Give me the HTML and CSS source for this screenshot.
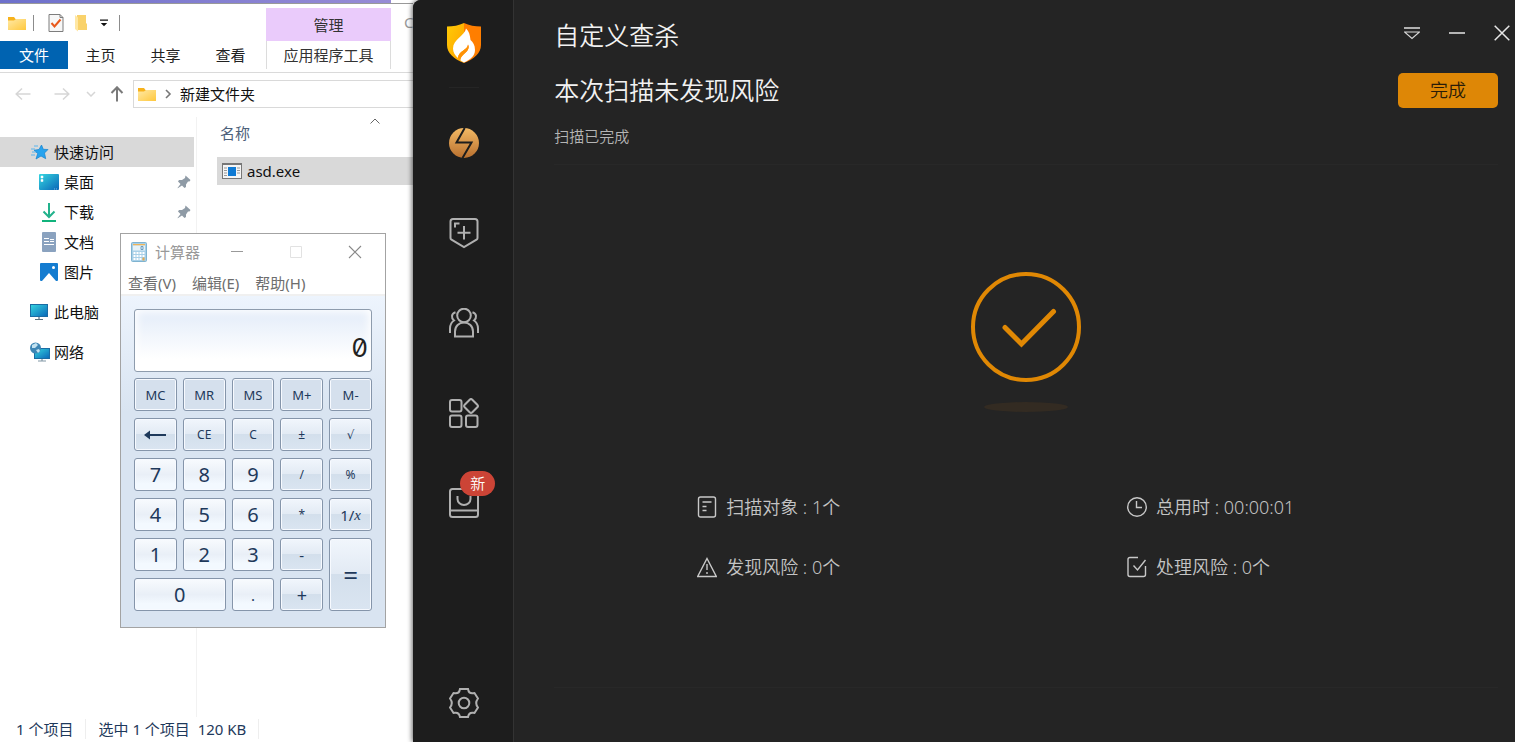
FILE: index.html
```html
<!DOCTYPE html>
<html lang="zh-CN">
<head>
    <meta charset="UTF-8">
    <meta name="viewport" content="width=device-width, initial-scale=1.0">
    <title>自定义查杀</title>
    <link rel="stylesheet" href="styles.css">
</head>
<body>
    <svg width="0" height="0" class="defs" aria-hidden="true">
        <defs>
            <linearGradient id="folderFill" x1="0" y1="0" x2="1" y2="1">
                <stop offset="0" stop-color="#ffe9a6"/>
                <stop offset="1" stop-color="#ffc83d"/>
            </linearGradient>
            <linearGradient id="screenFill" x1="0" y1="0" x2="1" y2="1">
                <stop offset="0" stop-color="#35d6e0"/>
                <stop offset="1" stop-color="#0a66b8"/>
            </linearGradient>
            <linearGradient id="boltFill" x1="0" y1="0" x2="0" y2="1">
                <stop offset="0" stop-color="#f3b964"/>
                <stop offset="1" stop-color="#b9702f"/>
            </linearGradient>
            <linearGradient id="shieldLeft" x1="0" y1="0" x2="1" y2="1">
                <stop offset="0" stop-color="#ffcb05"/>
                <stop offset="1" stop-color="#ffa000"/>
            </linearGradient>
            <symbol id="folder" viewBox="0 0 18 16">
                <path d="M0 2h6l1.500 2H18v10.500H0z" fill="#f7b21c"/>
                <path d="M0 5.500h6L8 4H18v11H0z" fill="url(#folderFill)"/>
            </symbol>
            <symbol id="pin" viewBox="0 0 14 14">
                <path d="M8.500 .5l5 4.500-1 1.500-1.500 0-2 3 0 2.500-1.500 1-2.500-2.500L.8 13.200.5 13l3-4L1 6.500l1-1.500 3 0 3-2z" fill="#8f9ba6"/>
            </symbol>
        </defs>
    </svg>

    <div class="desktop">
        <!-- File explorer -->
        <section class="explorer">
            <div class="top-edge"></div>
            <header class="ribbon">
                <div class="ribbon-main">
                    <div class="quick-bar">
                        <button class="quick-btn" aria-label="文件夹"><svg width="18" height="16"><use href="#folder"/></svg></button>
                        <span class="quick-sep first"></span>
                        <button class="quick-btn" aria-label="属性">
                            <svg width="16" height="18" viewBox="0 0 16 18">
                                <path d="M1 .5h11l3 3v14H1z" fill="#f7f7f7" stroke="#7d7d7d"/>
                                <path d="M12 .5v3h3" fill="none" stroke="#7d7d7d"/>
                                <path d="M3.500 9l3 3.500 6-7" fill="none" stroke="#e8591c" stroke-width="2"/>
                            </svg>
                        </button>
                        <button class="quick-btn" aria-label="新建文件夹">
                            <svg width="14" height="18" viewBox="0 0 14 18">
                                <path d="M3 1h9v8l1 1v6H3z" fill="#f9d26b"/>
                                <path d="M1 1l3 2.500V17.500L1 15z" fill="#ffe7a3"/>
                            </svg>
                        </button>
                        <button class="quick-btn quick-more" aria-label="自定义快速访问工具栏">
                            <svg width="8" height="8" viewBox="0 0 8 8"><path d="M0 .5h8v1.200H0zM.8 4h6.400L4 7.200z" fill="#111"/></svg>
                        </button>
                        <span class="quick-sep"></span>
                    </div>
                    <nav class="tabs">
                        <button class="tab tab-file">文件</button>
                        <button class="tab">主页</button>
                        <button class="tab">共享</button>
                        <button class="tab">查看</button>
                    </nav>
                </div>
                <div class="ribbon-context">
                    <span class="context-title">管理</span>
                    <button class="context-tab">应用程序工具</button>
                </div>
                <span class="window-title">C</span>
            </header>

            <div class="nav-bar">
                <button class="nav-btn" aria-label="返回"><svg width="16" height="14" viewBox="0 0 16 14"><path d="M15.500 7H1M7 1.500L1.200 7 7 12.500" fill="none" stroke="#d6d6d6" stroke-width="1.500"/></svg></button>
                <button class="nav-btn" aria-label="前进"><svg width="16" height="14" viewBox="0 0 16 14"><path d="M.5 7H15M9 1.500L14.800 7 9 12.500" fill="none" stroke="#d6d6d6" stroke-width="1.500"/></svg></button>
                <button class="nav-btn nav-recent" aria-label="最近浏览"><svg width="10" height="6" viewBox="0 0 10 6"><path d="M1 1l4 4 4-4" fill="none" stroke="#d6d6d6" stroke-width="1.500"/></svg></button>
                <button class="nav-btn nav-up" aria-label="上移"><svg width="14" height="16" viewBox="0 0 14 16"><path d="M7 15.500V1.500M1.500 7L7 1.300 12.500 7" fill="none" stroke="#7a7a7a" stroke-width="2"/></svg></button>
                <div class="address">
                    <svg width="18" height="16"><use href="#folder"/></svg>
                    <svg width="8" height="10" viewBox="0 0 8 10"><path d="M2 1l4 4-4 4" fill="none" stroke="#777" stroke-width="1.600"/></svg>
                    <span>新建文件夹</span>
                </div>
            </div>

            <div class="explorer-body">
                <ul class="tree">
                    <li class="node selected">
                        <svg width="20" height="18" viewBox="0 0 20 18">
                            <path d="M11.500 2l1.800 4.300 4.700.2-3.500 3.500 1.200 5.700-4.700-2.700L6 16l1.700-5.500L4 7.200l5-.7z" fill="#27a3ee" stroke="#1583cf" stroke-width=".7"/>
                            <path d="M4 3h4M1 6h4M2 9h4M1 12h4" stroke="#58b5ee" stroke-width="1"/>
                        </svg>
                        <span>快速访问</span>
                    </li>
                    <li class="node child">
                        <svg width="20" height="18" viewBox="0 0 20 18"><rect y="1" width="20" height="16" rx="1" fill="url(#screenFill)"/><path d="M2 3h2v2H2zM2 6.500h2v2H2zM15 16h1M17 16h1" fill="#fff" stroke="#fff" stroke-width=".5"/></svg>
                        <span>桌面</span>
                        <svg class="pin" width="14" height="14"><use href="#pin"/></svg>
                    </li>
                    <li class="node child">
                        <svg width="20" height="20" viewBox="0 0 20 20"><path d="M10 1v14M4.500 9.500L10 15l5.500-5.500" fill="none" stroke="#22b28c" stroke-width="2"/><path d="M3 19h14" stroke="#11b37c" stroke-width="2"/></svg>
                        <span>下载</span>
                        <svg class="pin" width="14" height="14"><use href="#pin"/></svg>
                    </li>
                    <li class="node child">
                        <svg width="20" height="20" viewBox="0 0 20 20"><rect x="3" width="14" height="20" rx="1" fill="#8aa2bf"/><path d="M5 6.500h5M5 9.500h5M5 12.500h10M11 7.500h4M11 9.500h4" stroke="#fff" stroke-width="1.200"/></svg>
                        <span>文档</span>
                    </li>
                    <li class="node child">
                        <svg width="20" height="18" viewBox="0 0 20 18"><rect x="1" width="18" height="18" rx="1" fill="#147cd0"/><path d="M3 18l7-8 7 8z" fill="#fff"/><circle cx="14.500" cy="4.500" r="1.500" fill="#fff"/></svg>
                        <span>图片</span>
                    </li>
                    <li class="node root">
                        <svg width="20" height="18" viewBox="0 0 20 18"><rect x=".5" y="1.500" width="17" height="12" fill="url(#screenFill)" stroke="#1b6ca3"/><path d="M5 16.500h8M9 14v2" stroke="#587080" stroke-width="1.200"/></svg>
                        <span>此电脑</span>
                    </li>
                    <li class="node root">
                        <svg width="20" height="20" viewBox="0 0 20 20"><rect x="4.500" y="6.500" width="15" height="10" fill="url(#screenFill)" stroke="#1b6ca3"/><path d="M8 19h8M12 17v2" stroke="#8298a6" stroke-width="1.200"/><circle cx="5.500" cy="6" r="5.500" fill="#3e86b5"/><path d="M2 3l4-2 2 2-3 3-3 0zM6 8l3-1 1 2-2 2z" fill="#c3e2f0"/></svg>
                        <span>网络</span>
                    </li>
                </ul>
                <table class="files">
                    <thead>
                        <tr>
                            <th>
                                <div class="column-head">
                                    <span>名称</span>
                                    <svg class="sort" width="10" height="6" viewBox="0 0 10 6"><path d="M.5 5.500L5 1l4.500 4.500" fill="none" stroke="#666"/></svg>
                                </div>
                            </th>
                        </tr>
                    </thead>
                    <tbody>
                        <tr>
                            <td>
                                <div class="file">
                                    <svg width="20" height="16" viewBox="0 0 20 16"><rect x=".5" y=".5" width="19" height="15" fill="#f5f5f5" stroke="#777"/><path d="M0 1h20" stroke="#777" stroke-width="2"/><rect x="6" y="4" width="8" height="9" fill="#0f7ad4"/><path d="M2 5h3M2 7.500h3M2 10h3M2 12.500h3M15 5h3M15 7.500h3M15 10h3" stroke="#999"/></svg>
                                    <span>asd.exe</span>
                                </div>
                            </td>
                        </tr>
                    </tbody>
                </table>
            </div>

            <footer class="status-bar">
                <span class="status-item">1 个项目</span>
                <span class="status-item">选中 1 个项目&nbsp; 120 KB</span>
            </footer>
        </section>

        <!-- Security scanner -->
        <section class="scanner">
            <nav class="side">
                <svg class="logo" width="34" height="40" viewBox="0 0 34 40">
                    <path d="M17 0C12 2.500 6 3.500 0 3.500V22c0 8 7 14 17 18z" fill="url(#shieldLeft)"/>
                    <path d="M17 0c5 2.500 11 3.500 17 3.500V22c0 8-7 14-17 18z" fill="#ff7e00"/>
                    <path d="M19 5.500c-1 7-13 11-13 20 0 4 2 7 5 9.500 0-7 10-8 10-13.500 2 4-1 7-4 9.500-2 2-4 4-3.500 6.500L17 39.500c6-2.500 11-6.500 11-12.500 0-5-2-8-4.500-10C23 12 22 8 19 5.500z" fill="#fff"/>
                    <path d="M11 35c0-7 10-8 10-13.500 2 4-1 7-4 9.500-2 2-3.500 3.500-3.500 5.500z" fill="#ff9205"/>
                </svg>
                <span class="side-line"></span>
                <button class="side-btn" aria-label="病毒查杀">
                    <svg width="30" height="30" viewBox="0 0 30 30"><circle cx="15" cy="15" r="15" fill="url(#boltFill)"/><path d="M15.700 0L7.500 14.500H22.500L13.500 30" fill="none"/></svg>
                </button>
                <button class="side-btn" aria-label="防护中心">
                    <svg width="30" height="32" viewBox="0 0 30 32"><path d="M4 2h22q2.500 0 2.500 2.500V21q0 1-1 1.700L15 30 2.500 22.700q-1-.7-1-1.700V4.500Q1.500 2 4 2z"/><path d="M6 10.500V6.500h4.500M15 9v13.500M8.500 15.700h13"/></svg>
                </button>
                <button class="side-btn" aria-label="访问控制">
                    <svg width="30" height="30" viewBox="0 0 30 30"><circle cx="15" cy="7.500" r="6.800"/><path d="M6 28.500v-5c0-5.500 4-9 9-9s9 3.500 9 9v5zM6.500 4.200C2.200 5.500 2 10 5 12.500 2 14.500 1 17 1 20.500V25M23.500 4.200c4.300 1.300 4.500 5.800 1.500 8.300 3 2 4 4.500 4 8V25"/></svg>
                </button>
                <button class="side-btn" aria-label="安全工具">
                    <svg width="30" height="30" viewBox="0 0 30 30"><rect x="1" y="2" width="11.500" height="11.500" rx="2"/><rect x="1" y="17.500" width="11.500" height="11.500" rx="2"/><rect x="17" y="17.500" width="11.500" height="11.500" rx="2"/><path d="M20.700 1.700q1.300-1.300 2.600 0l5 5q1.300 1.300 0 2.600l-5 5q-1.300 1.300-2.600 0l-5-5q-1.300-1.300 0-2.600z"/></svg>
                </button>
                <button class="side-btn" aria-label="应用商店">
                    <svg width="30" height="30" viewBox="0 0 30 30"><rect x="1" y="1" width="28" height="28" rx="2.500"/><path d="M1 22.500h28M8.500 8v3c0 3.500 3 6 6.500 6s6.500-2.500 6.500-6V8"/></svg>
                    <span class="badge">新</span>
                </button>
                <button class="side-btn settings" aria-label="设置">
                    <svg width="30" height="30" viewBox="0 0 30 30"><circle cx="15" cy="15" r="5.300"/><path d="M11 1h8q.8 4.800 5 4.300l1.500-.3 3.500 5.500q-3.600 4.500 0 9L25.500 25l-1.500-.3q-4.200-.5-5 4.300h-8q-.8-4.800-5-4.300L4.500 25 1 19.500q3.600-4.500 0-9L4.500 5l1.500.3q4.200.5 5-4.300z"/></svg>
                </button>
            </nav>

            <main class="panel">
                <header class="panel-title">
                    <h1>自定义查杀</h1>
                    <div class="window-controls">
                        <button aria-label="菜单"><svg width="16" height="14" viewBox="0 0 16 14"><path d="M0 2h16" stroke="#b0b0b0" stroke-width="2"/><path d="M.5 6h15L8 12.500z" fill="none" stroke="#d8d8d8" stroke-width="1.200"/></svg></button>
                        <button aria-label="最小化"><svg width="16" height="14" viewBox="0 0 16 14"><path d="M0 7h16" stroke="#b5b5b5" stroke-width="2"/></svg></button>
                        <button aria-label="关闭"><svg width="16" height="16" viewBox="0 0 16 16"><path d="M.7.7l14.600 14.600M15.300.7L.7 15.300" stroke="#e6e6e6" stroke-width="1.500"/></svg></button>
                    </div>
                </header>
                <div class="panel-content">
                    <div class="summary">
                        <h2>本次扫描未发现风险</h2>
                        <button class="done">完成</button>
                    </div>
                    <p class="summary-text">扫描已完成</p>
                    <div class="result">
                        <svg class="result-icon" width="110" height="142" viewBox="0 0 110 142">
                            <circle cx="55" cy="55" r="53" fill="none" stroke="#e08804" stroke-width="4"/>
                            <path d="M34 55.500L50.500 72 82.500 39.500" fill="none" stroke="#e08804" stroke-width="5" stroke-linecap="round"/>
                            <ellipse cx="55" cy="135" rx="42" ry="5" fill="#332b22"/>
                        </svg>
                        <ul class="stats">
                            <li>
                                <svg width="20" height="24" viewBox="0 0 20 24"><rect x="1.500" y="2" width="17" height="20" rx="2"/><path d="M5.500 7h9M5.500 11.500h4M5.500 15.500h4"/></svg>
                                <span>扫描对象 : 1个</span>
                            </li>
                            <li>
                                <svg width="20" height="24" viewBox="0 0 20 24"><circle cx="10" cy="12" r="9.300"/><path d="M9.500 6v6.500H15"/></svg>
                                <span>总用时 : 00:00:01</span>
                            </li>
                            <li>
                                <svg width="20" height="24" viewBox="0 0 20 24"><path d="M10 3.500L19.300 21.500H.7zM10 9v6M10 17v2"/></svg>
                                <span>发现风险 : 0个</span>
                            </li>
                            <li>
                                <svg width="20" height="24" viewBox="0 0 20 24"><path d="M11 2.500H3Q1 2.500 1 4.500v15q0 2 2 2h13.500q2 0 2-2V11M6.500 10.500l4 4.500L18.500 5"/></svg>
                                <span>处理风险 : 0个</span>
                            </li>
                        </ul>
                    </div>
                </div>
            </main>
        </section>

        <!-- Calculator -->
        <section class="calc">
            <header class="calc-title">
                <svg width="16" height="20" viewBox="0 0 16 20"><rect x=".5" y=".5" width="15" height="19" rx="1" fill="#a8d0e8" stroke="#7fb3d0"/><rect x="2" y="2" width="12" height="1.500" fill="#f0b458"/><rect x="2" y="3.500" width="12" height="5" fill="#e6f2f8"/><path d="M2.500 11h2M5.500 11h2M8.500 11h2M11.500 11h2M2.500 14h2M5.500 14h2M8.500 14h2M11.500 14h2M2.500 17h2M5.500 17h2M8.500 17h2" stroke="#fff" stroke-width="2"/><path d="M11.500 17h2" stroke="#e7a84b" stroke-width="3"/><path d="M10 4.500h2v3h-2z" fill="none" stroke="#6a9cc0"/></svg>
                <span class="calc-name">计算器</span>
                <button aria-label="最小化"><svg width="12" height="12" viewBox="0 0 12 12"><path d="M0 5.500h12" stroke="#999"/></svg></button>
                <button aria-label="最大化" disabled><svg width="12" height="12" viewBox="0 0 12 12"><path d="M.5.5h11v11H.5z" fill="none" stroke="#e2e2e2"/></svg></button>
                <button aria-label="关闭"><svg width="14" height="14" viewBox="0 0 14 14"><path d="M1 1l12 12M13 1L1 13" stroke="#888" stroke-width="1.100"/></svg></button>
            </header>
            <nav class="calc-menu">
                <button>查看(V)</button>
                <button>编辑(E)</button>
                <button>帮助(H)</button>
            </nav>
            <div class="calc-body">
                <input class="calc-display" type="text" value="0" aria-label="结果" readonly>
                <div class="keys">
                    <button class="key memory">MC</button>
                    <button class="key memory">MR</button>
                    <button class="key memory">MS</button>
                    <button class="key memory">M+</button>
                    <button class="key memory">M-</button>
                    <button class="key" aria-label="退格"><svg width="22" height="10" viewBox="0 0 22 10"><path d="M5 5h17" stroke="#1e395b" stroke-width="2"/><path d="M0 5l6-4.500v9z" fill="#1e395b"/></svg></button>
                    <button class="key">CE</button>
                    <button class="key">C</button>
                    <button class="key">±</button>
                    <button class="key root-key">√</button>
                    <button class="key digit">7</button>
                    <button class="key digit">8</button>
                    <button class="key digit">9</button>
                    <button class="key">/</button>
                    <button class="key">%</button>
                    <button class="key digit">4</button>
                    <button class="key digit">5</button>
                    <button class="key digit">6</button>
                    <button class="key">*</button>
                    <button class="key inverse">1/<i>x</i></button>
                    <button class="key digit">1</button>
                    <button class="key digit">2</button>
                    <button class="key digit">3</button>
                    <button class="key minus">-</button>
                    <button class="key equals">=</button>
                    <button class="key digit zero">0</button>
                    <button class="key digit point">.</button>
                    <button class="key plus">+</button>
                </div>
            </div>
        </section>
    </div>
</body>
</html>
```
FILE: styles.css
```css
* {
    box-sizing: border-box;
}
body {
    margin: 0;
    background: #fff;
    font-family: "Noto Sans", "Noto Sans CJK SC", sans-serif;
    font-size: 15px;
    line-height: 20px;
    color: #111;
}
button {
    padding: 0;
    border: 0;
    background: none;
    color: inherit;
    font: inherit;
    white-space: nowrap;
}
svg {
    display: block;
    flex: none;
}
ul {
    list-style: none;
    margin: 0;
    padding: 0;
}
.defs {
    position: absolute;
}
.desktop {
    position: relative;
    display: grid;
    grid-template-columns: minmax(0, 3fr) minmax(0, 8fr);
    min-height: 100vh;
    overflow: hidden;
}

/* File explorer */
.explorer {
    display: flex;
    flex-direction: column;
    overflow: hidden;
}
.top-edge {
    height: 4px;
    border-bottom: 1px solid #999;
    background: linear-gradient(90deg, #6d70cb, #978bd6) no-repeat;
    background-size: 391px 100%;
}
.ribbon {
    display: flex;
    border-bottom: 1px solid #dadada;
}
.ribbon-main {
    flex: none;
    width: 266px;
}
.quick-bar {
    display: flex;
    align-items: center;
    height: 37px;
    padding-left: 4px;
}
.quick-btn {
    display: flex;
    justify-content: center;
    width: 25px;
}
.quick-more {
    width: 21px;
}
.quick-sep {
    width: 1px;
    height: 16px;
    margin-left: 5px;
    background: #8c8c8c;
}
.quick-sep.first {
    margin-left: 4px;
    margin-right: 9px;
}
.tabs {
    display: flex;
    height: 31px;
    align-items: flex-start;
}
.tab {
    width: 65px;
    height: 28px;
    color: #222;
}
.tab-file {
    width: 68px;
    background: #0063b1;
    color: #fff;
}
.ribbon-context {
    display: flex;
    flex: none;
    flex-direction: column;
    width: 125px;
    padding-top: 4px;
    color: #333;
}
.context-title {
    height: 33px;
    background: #eacbfb;
    line-height: 34px;
    text-align: center;
}
.context-tab {
    height: 28px;
    border: solid #dcdcdc;
    border-width: 0 1px;
}
.window-title {
    padding: 8px 0 0 13px;
    color: #999;
}
.nav-bar {
    display: flex;
    height: 35px;
    padding: 7px 0 0 3px;
}
.nav-btn {
    display: flex;
    flex: none;
    align-items: center;
    justify-content: center;
    width: 39px;
}
.nav-recent {
    width: 20px;
}
.nav-up {
    width: 32px;
}
.address {
    display: flex;
    flex: 1;
    align-items: center;
    gap: 8px;
    padding-left: 4px;
    border: 1px solid #d9d9d9;
    border-right: 0;
    white-space: nowrap;
}
.explorer-body {
    display: flex;
    flex: 1;
    align-items: stretch;
    padding-top: 9px;
}
.tree {
    flex: none;
    width: 197px;
    padding: 20px 2px 0 0;
    border-right: 1px solid #f2f2f2;
}
.node {
    display: flex;
    align-items: center;
    gap: 4px;
    height: 30px;
    padding: 0 3px 0 30px;
}
.node.selected {
    background: #d9d9d9;
}
.node.child {
    gap: 5px;
    padding-left: 39px;
}
.node.root {
    margin-top: 10px;
}
.pin {
    margin-left: auto;
}
.files {
    flex: 1;
    align-self: flex-start;
    margin-left: 20px;
    border-collapse: collapse;
}
.files th,
.files td {
    padding: 0;
    font-weight: 400;
    text-align: left;
}
.column-head {
    display: flex;
    justify-content: space-between;
    height: 40px;
    padding: 6px 33px 0 3px;
    color: #4c607a;
}
.sort {
    margin-top: -5px;
}
.file {
    display: flex;
    align-items: center;
    gap: 5px;
    height: 28px;
    padding-left: 5px;
    background: #d9d9d9;
}
.status-bar {
    display: flex;
    align-items: center;
    height: 25px;
    padding: 0 0 2px 4px;
    color: #1e395b;
}
.status-item {
    padding: 0 12px;
    border-right: 1px solid #eee;
    white-space: nowrap;
}

/* Security scanner */
.scanner {
    display: flex;
    border-radius: 8px 0 0 0;
    background: #242424;
    box-shadow: -1px 0 5px rgba(0, 0, 0, 0.6);
    color: #c4c4c4;
    font-weight: 350;
}
.side {
    display: flex;
    flex: none;
    flex-direction: column;
    align-items: center;
    width: 101px;
    padding: 23px 0 9px 2px;
    border-right: 1px solid #333;
    border-radius: 8px 0 0 0;
    background: #1d1d1d;
}
.side-line {
    width: 30px;
    height: 1px;
    margin: 24px 0 25px;
    background: #252525;
}
.side-btn {
    position: relative;
    display: flex;
    align-items: center;
    justify-content: center;
    width: 60px;
    height: 60px;
    margin-bottom: 30px;
}
.side-btn svg {
    fill: none;
    stroke: #b0b0b0;
    stroke-width: 2;
}
.side-btn circle[fill] {
    stroke: none;
}
.side-btn circle[fill] + path {
    stroke: #1d1d1d;
}
.settings {
    margin: auto 0 0;
}
.badge {
    position: absolute;
    top: -2px;
    left: 26px;
    width: 35px;
    border-radius: 13px;
    background: #cc4436;
    color: #fff;
    line-height: 25px;
}
.panel {
    display: flex;
    flex: 1;
    flex-direction: column;
    padding-left: 40px;
}
.panel-title {
    display: flex;
    align-items: center;
    justify-content: space-between;
    height: 69px;
    padding-right: 1px;
}
h1,
h2 {
    margin: 0;
    color: #f2f2f2;
    font-size: 25px;
    font-weight: 350;
    line-height: 36px;
}
.window-controls {
    display: flex;
    gap: 21px;
    padding-bottom: 3px;
}
.window-controls button {
    display: flex;
    align-items: center;
    justify-content: center;
    width: 24px;
    height: 24px;
}
.panel-content {
    display: flex;
    flex: 1;
    flex-direction: column;
    padding: 0 17px 54px 0;
}
.summary {
    display: flex;
    align-items: center;
    justify-content: space-between;
    height: 42px;
}
.done {
    width: 100px;
    height: 35px;
    border-radius: 5px;
    background: #de8706;
    color: #2a1c08;
    font-size: 18px;
}
.summary-text {
    margin: 0;
    padding: 15px 0 18px;
    color: #b5b5b5;
}
.result {
    display: flex;
    flex: 1;
    flex-direction: column;
    align-items: center;
    justify-content: center;
    padding-top: 2px;
    border: solid #282828;
    border-width: 1px 0;
}
.stats {
    display: grid;
    grid-template-columns: 1fr 1fr;
    align-self: stretch;
    row-gap: 30px;
    padding: 78px 42px 0;
    font-size: 18px;
    line-height: 30px;
}
.stats li {
    display: flex;
    align-items: center;
    gap: 9px;
    padding-left: 101px;
    white-space: nowrap;
}
.stats svg {
    fill: none;
    stroke: #c8c8c8;
    stroke-width: 1.4;
}

/* Calculator */
.calc {
    position: absolute;
    top: 233px;
    left: 120px;
    width: 266px;
    border: 1px solid #a3a3a3;
    background: #fff;
}
.calc-title {
    display: flex;
    align-items: center;
    height: 36px;
    padding: 0 1px 0 10px;
    color: #999;
}
.calc-name {
    flex: 1;
    padding-left: 8px;
}
.calc-title button {
    display: flex;
    justify-content: center;
    width: 59px;
}
.calc-menu {
    display: flex;
    gap: 16px;
    height: 26px;
    padding: 3px 7px;
    border-bottom: 2px solid #f0f0f0;
    color: #6d6d6d;
}
.calc-menu button {
    height: 20px;
}
.calc-body {
    padding: 13px 13px 16px;
    background: linear-gradient(#edf4fd, #d9e4f1 35%);
}
.calc-display {
    display: block;
    width: 100%;
    height: 63px;
    margin-bottom: 6px;
    padding: 14px 3px 0;
    border: 1px solid #8e9cad;
    border-radius: 3px;
    background: linear-gradient(#e3ecf9, #fff 80%);
    box-shadow: inset 0 0 8px 2px #fff;
    color: #222;
    font-family: Inter, sans-serif;
    font-feature-settings: "zero";
    font-size: 26px;
    text-align: right;
}
.keys {
    display: grid;
    grid-template-columns: repeat(5, 1fr);
    grid-auto-rows: 33px;
    gap: 7px 6px;
}
.key {
    display: flex;
    align-items: center;
    justify-content: center;
    border: 1px solid #8595aa;
    border-radius: 3px;
    background: linear-gradient(#f1f6fc, #e2eaf4 49%, #d3dfec 50%, #dae5f1);
    box-shadow: inset 0 0 0 1px #f7faff;
    color: #1e395b;
    font-size: 12px;
}
.key.memory {
    background: #d5e0ed;
    font-size: 13px;
}
.key.digit {
    background: linear-gradient(#f8fbfe, #e9eff7 50%, #f3f9ff 80%);
    font-size: 20px;
}
.key.digit.point {
    font-size: 15px;
}
.key.root-key {
    font-family: "DejaVu Sans", sans-serif;
}
.key.inverse {
    font-size: 15px;
}
.key.inverse i {
    font-family: "Liberation Serif", serif;
}
.key.equals {
    grid-row: span 2;
    font-size: 26px;
}
.key.zero {
    grid-column: span 2;
}
.key.minus {
    font-size: 15px;
}
.key.plus {
    font-size: 18px;
}
```
